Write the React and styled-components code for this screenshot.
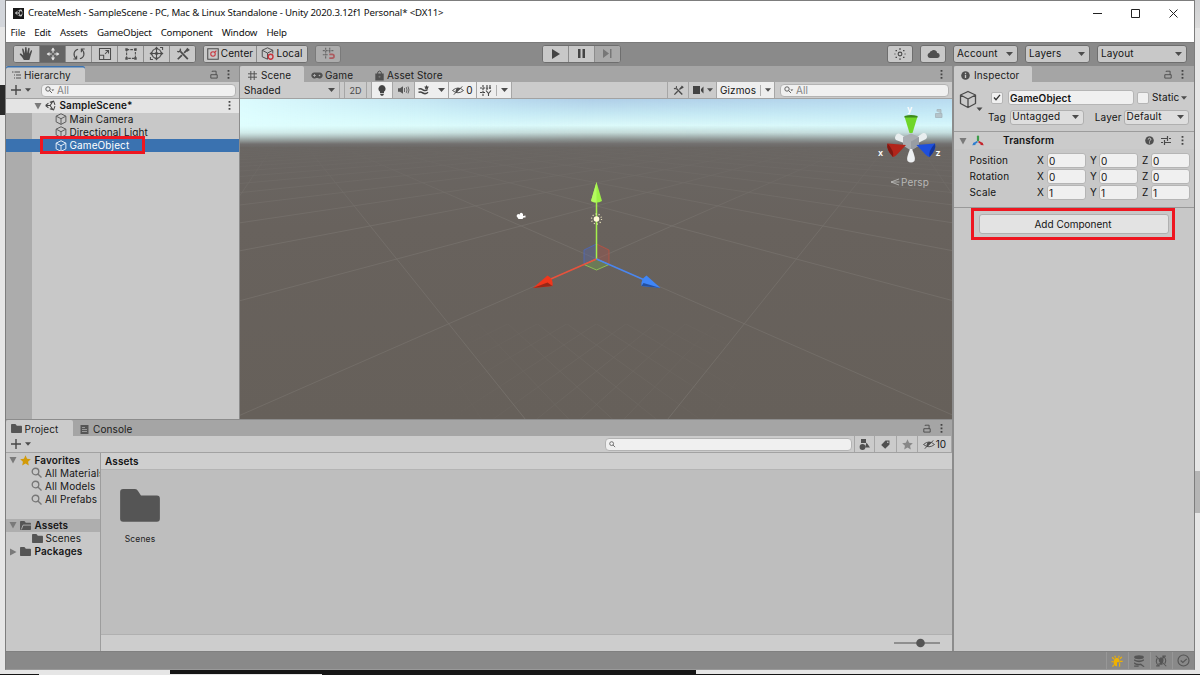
import React from "react";
import styled, { createGlobalStyle, css } from "styled-components";

const Global = createGlobalStyle`
  * { box-sizing: border-box; }
  body { margin: 0; overflow: hidden; }
  svg { display: block; flex: none; }
`;

const ui = `"Inter", "Liberation Sans", sans-serif`;
const system = `"Noto Sans", "Open Sans", sans-serif`;

const Desktop = styled.div`
  width: 1200px;
  height: 675px;
  padding-left: 5px;
  overflow: hidden;
  background:
    linear-gradient(#2a2a2a, #2a2a2a) 0 85px / 5px 30px no-repeat,
    linear-gradient(#d3d6db, #d3d6db) 0 0 / 5px 27px no-repeat,
    linear-gradient(#cfd0d2, #dcdcdc) 1195px 0 / 5px 28px no-repeat,
    linear-gradient(#b5b5b5, #b5b5b5) 1195px 471px / 5px 42px no-repeat,
    linear-gradient(#161616, #161616) 170px 669px / 526px 5px no-repeat,
    linear-gradient(#161616, #161616) 0 674px / 39px 1px no-repeat,
    linear-gradient(#161616, #161616) 322px 674px / 878px 1px no-repeat,
    #e6e6e6;
`;

const Window = styled.div`
  display: flex;
  flex-direction: column;
  width: 1190px;
  height: 670px;
  border: 1px solid #7d7d7d;
  border-bottom-color: #999;
  background: #8a8a8a;
  color: #141414;
  font: 10px/13px ${ui};
  letter-spacing: 0.11px;
  white-space: nowrap;
`;

const TitleBar = styled.header`
  display: flex;
  align-items: center;
  height: 24px;
  padding: 0 16px 0 7px;
  background: #fff;
  color: #111;
  font: 9.7px/14px ${system};
  letter-spacing: -0.17px;
`;
const AppIcon = styled.span`
  display: grid;
  place-items: center;
  width: 11px;
  height: 11px;
  margin-right: 4px;
  background: #181818;
`;
const Title = styled.span`flex: 1;`;
const Caption = styled.span`
  display: flex;
  align-items: center;
  gap: 29px;
`;
const MenuBar = styled.nav`
  display: flex;
  gap: 9.1px;
  height: 17px;
  padding: 1px 0 0 4.5px;
  background: #fff;
  color: #111;
  font: 9.7px/14px ${system};
  letter-spacing: -0.2px;
`;

const Toolbar = styled.div`
  display: flex;
  align-items: center;
  height: 24px;
  padding: 0 7px 2px;
  border-top: 1px solid #7b7b7b;
`;
const Spring = styled.span`flex: 1;`;
const Gap = styled.span`flex: none; width: ${(p) => p.$w}px;`;
const Group = styled.div`
  display: flex;
  flex: none;
  height: 18px;
  border: 1px solid #6e6e6e;
  border-radius: 3px;
  overflow: hidden;
  background: #c8c8c8;
  opacity: ${(p) => (p.$faded ? 0.55 : 1)};
`;
const Tool = styled.button`
  display: flex;
  align-items: center;
  justify-content: center;
  gap: 2px;
  width: ${(p) => p.$w || 26}px;
  margin: 0;
  padding: 0;
  border: 0;
  border-left: 1px solid #8c8c8c;
  background: ${(p) => (p.$on ? "#656565" : p.$off ? "#a9a9a9" : "#c8c8c8")};
  color: ${(p) => (p.$on ? "#e4e4e4" : p.$off ? "#777" : "#4c4c4c")};
  font: inherit;
  letter-spacing: inherit;
  &:first-child { border-left: 0; }
  span { color: #141414; }
`;
const MenuButton = styled.button`
  display: flex;
  align-items: center;
  justify-content: space-between;
  flex: none;
  width: ${(p) => p.$w}px;
  height: ${(p) => p.$h || 18}px;
  margin: 0;
  padding: 0 4px ${(p) => (p.$soft ? 1 : 0)}px ${(p) => (p.$soft ? 1.5 : 3)}px;
  border: 1px solid ${(p) => (p.$soft ? "#b0b0b0" : "#6e6e6e")};
  border-radius: 3px;
  background: ${(p) => (p.$soft ? "#dedede" : "#c8c8c8")};
  color: #141414;
  font: inherit;
  letter-spacing: 0.18px;
`;

const Docks = styled.main`
  display: flex;
  gap: 2px;
  height: 585px;
  background: #8c8c8c;
`;
const LeftDock = styled.div`
  display: flex;
  flex-direction: column;
  gap: 1px;
  width: 946px;
`;
const UpperDock = styled.div`
  display: flex;
  gap: 1px;
  height: 353px;
`;
const Panel = styled.section`
  display: flex;
  flex-direction: column;
  flex: ${(p) => (p.$w ? "none" : 1)};
  width: ${(p) => (p.$w ? p.$w + "px" : "auto")};
  min-height: 0;
  background: #c8c8c8;
`;
const TabBar = styled.div`
  display: flex;
  flex: none;
  height: 16px;
  padding-right: ${(p) => p.$pr ?? 9}px;
  background: #a5a5a5;
`;
const Tab = styled.div`
  display: flex;
  align-items: center;
  gap: ${(p) => p.$gap || 4}px;
  width: ${(p) => p.$w}px;
  padding: 2px 0 0 ${(p) => p.$pl ?? 7}px;
  border-radius: 2px 2px 0 0;
  color: #1c1c1c;
  ${(p) => p.$active && css`background: #cbcbcb;`}
  ${(p) => p.$focus && css`box-shadow: inset 0 1.5px #3a72b0;`}
  svg { color: #505050; }
`;
const TabTools = styled.div`
  display: flex;
  align-items: center;
  gap: 9px;
  margin-left: auto;
  color: #4a4a4a;
`;
const PanelToolbar = styled.div`
  display: flex;
  align-items: center;
  flex: none;
  height: 17px;
  padding: 0 ${(p) => p.$pr ?? 3}px 0 ${(p) => p.$pl ?? 5}px;
  border-bottom: 1px solid #a2a2a2;
  background: #cbcbcb;
`;
const Search = styled.div`
  display: flex;
  align-items: center;
  gap: 2px;
  width: ${(p) => p.$w}px;
  height: 13px;
  padding: 0 3px;
  border: 1px solid #b3b3b3;
  border-radius: 4px;
  background: #f0f0f0;
  color: #848484;
  svg { color: #555; }
`;
const Cell = styled.div`
  display: flex;
  align-items: center;
  justify-content: ${(p) => p.$justify || "center"};
  flex: none;
  gap: ${(p) => p.$gap ?? 2}px;
  width: ${(p) => p.$w}px;
  height: 16px;
  padding: 0 ${(p) => p.$pad ?? 3}px;
  border-right: 1px solid #a6a6a6;
  background: ${(p) => (p.$on ? "#eeeeee" : "transparent")};
  color: #4a4a4a;
  span { color: #161616; }
`;
const SmallCell = styled(Cell)`font-size: 9px; letter-spacing: 0;`;
const Bar = styled.i`width: 1px; height: 11px; background: #b0b0b0; margin: 0 2px;`;

const Tree = styled.div`
  position: relative;
  flex: 1;
  padding-top: 0.4px;
  background: linear-gradient(90deg, #acacac 26px, #c8c8c8 26px);
`;
const Row = styled.div`
  display: flex;
  align-items: center;
  gap: ${(p) => p.$gap ?? 2}px;
  height: 13.2px;
  padding-left: ${(p) => p.$indent}px;
  padding-right: 8px;
  font-weight: ${(p) => (p.$bold ? 600 : 400)};
  background: ${(p) => p.$bg || "transparent"};
  color: ${(p) => (p.$selected ? "#fff" : "#161616")};
  > svg { color: ${(p) => (p.$selected ? "#e8f0fa" : "#5a5a5a")}; }
`;
const TreeMark = styled.div`
  position: absolute;
  left: 34px;
  top: 37px;
  width: 105px;
  height: 18px;
  border: 3px solid #ee1620;
`;

const SceneView = styled.div`
  position: relative;
  flex: 1;
  overflow: hidden;
`;

const Content = styled.div`
  display: flex;
  flex: 1;
  min-height: 0;
`;
const Sidebar = styled.div`
  width: 95px;
  padding-top: 0.5px;
  border-right: 1px solid #9d9d9d;
  background: #c8c8c8;
  overflow: hidden;
`;
const RowGap = styled.div`height: 12.5px;`;
const Browser = styled.div`
  display: flex;
  flex-direction: column;
  flex: 1;
`;
const PathBar = styled.div`
  height: 17px;
  padding: 2px 4px;
  border-bottom: 1px solid #b4b4b4;
  background: #cfcfcf;
  font-weight: 600;
`;
const Items = styled.div`
  flex: 1;
  padding: 19px 0 0 19px;
  background: #bebebe;
`;
const Item = styled.figure`
  display: flex;
  flex-direction: column;
  align-items: center;
  gap: 11px;
  width: 40px;
  margin: 0;
  color: #222;
  font-size: 8.5px;
  letter-spacing: 0.15px;
  line-height: 13px;
`;
const ZoomBar = styled.div`
  display: flex;
  align-items: center;
  justify-content: flex-end;
  height: 17px;
  padding-right: 12px;
  border-top: 1px solid #b0b0b0;
  background: #cdcdcd;
`;

const ObjectHeader = styled.div`
  display: flex;
  gap: 5px;
  height: 50px;
  padding: 8px 5px 0 5px;
  border-bottom: 1px solid #9c9c9c;
  background: #cbcbcb;
`;
const HeaderLines = styled.div`
  display: flex;
  flex-direction: column;
  gap: 4.5px;
  flex: 1;
`;
const Line = styled.div`
  display: flex;
  align-items: center;
  height: 15px;
`;
const Check = styled.span`
  display: grid;
  place-items: center;
  flex: none;
  width: 12px;
  height: 12px;
  border: 1px solid #b5b5b5;
  border-radius: 2px;
  background: #f0f0f0;
`;
const Field = styled.div`
  flex: none;
  width: ${(p) => p.$w}px;
  height: 15px;
  padding: 0 1px;
  border: 1px solid #b5b5b5;
  border-radius: 3px;
  background: #f0f0f0;
  font-weight: ${(p) => (p.$bold ? 600 : 400)};
  line-height: 14px;
`;
const ComponentHeader = styled.div`
  display: flex;
  align-items: center;
  height: 17px;
  padding: 0 10px 0 5px;
  background: #cbcbcb;
  color: #4c4c4c;
  font-weight: 600;
  span { color: #141414; }
`;
const Properties = styled.div`
  height: 59px;
  padding-top: 3px;
  border-bottom: 1px solid #999;
`;
const Property = styled.div`
  display: grid;
  grid-template-columns: 67.5px 10px 39px 4px 9px 39px 4px 9px 39px;
  align-items: center;
  height: 16.4px;
  padding-left: 15.5px;
`;
const AddMark = styled.div`
  width: 204px;
  height: 32px;
  margin: 0 0 0 17px;
  padding: 3px 3px 3px 5px;
  border: 3px solid #ee1620;
`;
const AddButton = styled.button`
  display: block;
  width: 190px;
  height: 20px;
  margin: 0;
  padding: 0 2px 0 0;
  border: 1px solid #b0b0b0;
  border-radius: 3px;
  background: #e3e3e3;
  color: #141414;
  font: inherit;
  letter-spacing: 0;
`;
const StatusBar = styled.footer`
  display: flex;
  justify-content: flex-end;
  height: 18px;
  border-top: 1px solid #808080;
  background: #898989;
`;
const Status = styled.span`
  display: grid;
  place-items: center;
  width: 22px;
  padding-right: 1px;
  border-left: 1px solid #979797;
`;

/* icons */
const Svg = ({ w = 12, h, box = 16, children, ...rest }) => (
  <svg width={w} height={h || w} viewBox={`0 0 ${box} ${box}`} fill="none" stroke="currentColor" strokeWidth="1.4" {...rest}>
    {children}
  </svg>
);
const Arrow = ({ w = 7 }) => (
  <svg width={w} height="4" viewBox="0 0 7 4"><path d="M0 0h7L3.5 4z" fill="#4c4c4c" /></svg>
);
const Fold = ({ closed }) => (
  <svg width="8" height="8" viewBox="0 0 8 8"><path d={closed ? "M1 0.5v7L7.5 4z" : "M0.5 1h7L4 7.5z"} fill="#7a7a7a" /></svg>
);
const Dots = () => (
  <svg width="3" height="9" viewBox="0 0 3 9" fill="#444"><path d="M.6 0h1.800v1.800H.6zM.6 3.500h1.800v1.800H.6zM.6 7h1.800v1.800H.6z" /></svg>
);
const Lock = () => (
  <svg width="8" height="9" viewBox="0 0 8 9" fill="none" stroke="currentColor" strokeWidth=".9"><path d="M.8 4.700h6.400v3.400H.8zM2.200 2V1.200h3.900v3.500" /></svg>
);
const Lens = ({ w = 8, menu, color }) => (
  <svg width={w + (menu ? 2 : 0)} height={w} viewBox={`0 0 ${menu ? 10 : 8} 8`} fill="none" stroke={color || "currentColor"} strokeWidth=".9">
    <circle cx="3" cy="3" r="2.200" /><path d="M4.600 4.600 7 7" />{menu && <path d="M6.300 3.600h3L7.800 5z" fill="currentColor" stroke="none" />}
  </svg>
);
const Cube = ({ w = 12, s = 1.3 }) => (
  <Svg w={w} strokeWidth={s} strokeLinejoin="round"><path d="M8 1 14.500 4.200v7.600L8 15.200 1.500 11.800V4.200zM1.500 4.200 8 7.600l6.500-3.400M8 7.600v7.600" /></Svg>
);
const Hand = () => (
  <Svg w={15} stroke="none" fill="currentColor">
    <path d="M5.200 15C4 12.500 2.500 10.600 1 9.200c-.6-.8.600-1.500 1.500-.9L4.600 10 3.300 3.600c-.2-1.100 1.200-1.400 1.500-.4L6.300 8 6.500 1.800c0-1.100 1.500-1.100 1.600 0L8.500 8l1.300-5.500c.3-1 1.600-.7 1.500.3L10.600 8.500l2-3.500c.6-.9 1.700-.3 1.300.7L12.200 11c-.4 1.600-.7 2.600-1.200 4z" />
  </Svg>
);
const Move = () => (
  <Svg w={14} strokeWidth="1.3"><path d="M8 1.500v5M8 9.500v5M1.500 8h5M9.500 8h5" /><path d="M5.600 4 8 .7 10.400 4zM5.600 12 8 15.300 10.400 12zM4 5.600.7 8 4 10.400zM12 5.600 15.300 8 12 10.400z" fill="currentColor" stroke="none" /></Svg>
);
const Rotate = () => (
  <Svg w={14} strokeWidth="1.300"><path d="M7 2.500C1.800 3.500.8 9.500 4.800 13.200M1.500 13.700h3.800V10M9 13.500c5.200-1 6.200-7 2.200-10.700M14.500 2.300h-3.800V6" /></Svg>
);
const Scale = () => (
  <Svg w={14} strokeWidth="1.200"><path d="M1.700 1.700h12.600v12.600H1.700zM1.700 9.500h4.800v4.800M8 8l3.800-3.800M8.500 4h3.500v3.500" /></Svg>
);
const RectTool = () => (
  <Svg w={14} strokeWidth="1.200"><path d="M3 3h10v10H3z" strokeDasharray="3 1.200" /><path d="M1.500 1.500h2.800v2.800H1.500zM11.700 1.500h2.800v2.800h-2.800zM1.500 11.700h2.800v2.800H1.500zM11.700 11.700h2.800v2.800h-2.800z" fill="currentColor" stroke="none" /></Svg>
);
const TransformTool = () => (
  <Svg w={15} strokeWidth="1.100"><circle cx="8" cy="8" r="5" /><path d="M8 2v12M2 8h12M6.500 3.200 8 1.400 9.500 3.200M6.500 12.800 8 14.600 9.500 12.800M3.200 6.500 1.400 8l1.800 1.500M12.800 6.500 14.600 8l-1.800 1.500M11.800 1.500h2.700v2.700M1.500 11.800v2.700h2.700" /><path d="M6.300 6.300h3.400v3.400H6.300z" fill="currentColor" stroke="none" opacity=".6" /></Svg>
);
const Wrench = ({ w = 14 }) => (
  <Svg w={w} strokeWidth="2"><path d="M5 5l8.500 8.800M2 14l4.800-4.800M9.300 6.700 12 4" /><path d="M1.500 4.800c1.600 1.300 4.200.3 3.500-3M11.500 4.500l1.500-2.500 1.500 1.300-2.500 1.700" strokeWidth="1.600" /></Svg>
);
const Pivot = () => (
  <Svg w={12}><path d="M1 1h14v14H1z" /><g stroke="#c8343c"><circle cx="8" cy="8" r="3" /><path d="m10.200 5.800 2.300-2.300" /></g></Svg>
);
const LocalIcon = () => (
  <Svg w={13} strokeWidth="1.200"><path d="M8 15 1.500 12V4L8 1l6.500 3v4M1.500 4 8 7.500 14.500 4M8 7.500V15" /><circle cx="11.800" cy="12" r="3" stroke="#c8343c" strokeWidth="1.700" /></Svg>
);
const Snap = () => (
  <Svg w={13}><path d="M4.500 1v13M9.500 1v7M1 4.500h14M1 9.500h6" strokeDasharray="2.500 1" /><path d="M9 9h3.500a2.300 2.300 0 0 1 0 4.700H9" stroke="#c8343c" strokeWidth="2" /></Svg>
);
const Collab = () => (
  <Svg w={12} strokeWidth="1.500"><circle cx="8" cy="8" r="2.500" /><path d="M8 0v2.500M8 13.500V16M2 3.500h2M12 3.500h2M2 12.500h2M12 12.500h2M.5 8H2M14 8h1.500" /></Svg>
);
const Cloud = () => (
  <Svg w={13} stroke="none" fill="#4f4f4f"><path d="M3.500 13.500a3.200 3.200 0 0 1-.3-6.300A3 3 0 0 1 5.500 5a4 4 0 0 1 7 2.500 3 3 0 0 1 .3 6z" /></Svg>
);
const GridIcon = () => (
  <Svg w={9} strokeWidth="1.700"><path d="M5 0v16M11 0v16M0 5h16M0 11h16" /></Svg>
);
const Gamepad = () => (
  <svg width="12" height="7" viewBox="0 0 12 7"><path d="M3.500.5h5a3 3 0 1 1-1.500 5.500H5A3 3 0 1 1 3.500.5z" fill="#505050" /><path d="M2 3.500h3M3.500 2v3" stroke="#b5b5b5" strokeWidth=".8" /><circle cx="8.500" cy="3.500" r=".8" fill="#b5b5b5" /></svg>
);
const Bag = () => (
  <svg width="9" height="11" viewBox="0 0 9 11"><path d="M.3 3.500h8.400v7H.3z" fill="#505050" /><path d="M2.500 4.500q-.2-3.500 2-3.500t2 3.500" fill="none" stroke="#505050" /><circle cx="4.500" cy="6.800" r="1" fill="#777" /></svg>
);
const ListIcon = () => (
  <svg width="9" height="8" viewBox="0 0 9 8" stroke="#505050" strokeWidth="1"><path d="M0 1h1.500M2.500 1H8M2 4h1M4 4h5M2 7h1M4 7h5" /></svg>
);
const Info = ({ q }) => (
  <svg width="9" height="9" viewBox="0 0 9 9"><circle cx="4.500" cy="4.500" r="4.300" fill="#505050" />{q ? <path d="M3.200 3.500c0-2 2.800-1.600 2.600 0-.2 1-1.300.8-1.300 2M4.500 6.400v1" stroke="#d0d0d0" fill="none" /> : <path d="M4.500 1.700v1.200M4.500 3.800v3.300" stroke="#ccc" strokeWidth="1.300" />}</svg>
);
const Folder = ({ w = 11, open }) => (
  <svg width={w} height={w * 0.82} viewBox="0 0 40 33"><path d="M0 3a3 3 0 0 1 3-3h12q2 0 3 2l3 4.500h16a3 3 0 0 1 3 3V30a3 3 0 0 1-3 3H3a3 3 0 0 1-3-3z" fill="#555" />{open && <path d="M5 31 11 15h29" stroke="#bbb" strokeWidth="3" fill="none" />}</svg>
);
const Star = ({ color, w = 11 }) => (
  <svg width={w} height={w} viewBox="0 0 12 12"><path d="m6 .4 1.700 3.800 4.100.5-3 2.700.8 4.100L6 9.400l-3.600 2.100.8-4.100-3-2.700 4.100-.5z" fill={color} /></svg>
);
const ConsoleIcon = () => (
  <svg width="9" height="9" viewBox="0 0 9 9"><path d="M.5 0h8v9h-8z" fill="#555" /><path d="M2 2.500h3M2 4.500h5M2 6.500h5" stroke="#aaa" strokeWidth=".8" /></svg>
);
const Plus = () => (
  <svg width="10" height="10" viewBox="0 0 10 10" stroke="#484848" strokeWidth="1.400"><path d="M5 0v10M0 5h10" /></svg>
);
const UnityMark = ({ w = 11, color = "#444" }) => (
  <Svg w={w} stroke={color} strokeWidth="1.500"><path d="M1 8 5 4.500M1 8l4 3.500M1 8h6.500M7.500 8 11 2.500M7.500 8l3.500 5.500M7 3.200l5.500-1.500L14.500 7M14.500 9l-2 5.300L7 12.800" /></Svg>
);
const Bulb = () => (
  <svg width="8" height="11" viewBox="0 0 8 11"><path d="M4 0a3.700 3.700 0 0 1 2 6.700v1.500H2V6.700A3.700 3.700 0 0 1 4 0zM2.300 9h3.400v1L4 11l-1.700-1z" fill="#444" /></svg>
);
const Speaker = () => (
  <svg width="12" height="8" viewBox="0 0 12 8"><path d="M0 2.300h2L5 .3v7.400l-3-2H0z" fill="#555" /><path d="M6.500 2v4M8.300 1.200q1.500 2.800 0 5.600M10 .5q2 3.500 0 7" fill="none" stroke="#666" /></svg>
);
const Effects = () => (
  <svg width="12" height="10" viewBox="0 0 12 10" fill="none" stroke="#444" strokeWidth="1.500"><path d="M.5 4.200q2-1 4.500.6t4.500-.3M.5 7.400q2-1 4.500.6t5-.8" /><path d="m8.500 0 .8 1.500 1.900.3-1.400 1.200.4 1.500-1.700-.8-1.500.6.3-1.500L6 1.700l1.700-.2z" fill="#444" stroke="none" /></svg>
);
const HiddenEye = () => (
  <svg width="12" height="9" viewBox="0 0 12 9" fill="none" stroke="#484848" strokeWidth=".9"><path d="M.5 4.500Q6-.5 11.500 4.500 6 9 .5 4.500zM1.500 8.800l9-8.500" /><path d="M4 6.500 8 2.600Q5 1.500 4.200 4z" fill="#484848" /></svg>
);
const SnapGrid = () => (
  <svg width="12" height="11" viewBox="0 0 12 11" fill="none" stroke="#444" strokeWidth="1.100"><path d="M3 0v11M7 0v5M0 3h11M0 7.500h5" strokeDasharray="2.200 .8" /><path d="m6 5.500 2.500 3 2.500-3M8.500 8v3M10 0v4" /></svg>
);
const Camera = () => (
  <svg width="11" height="8" viewBox="0 0 11 8" fill="#444"><path d="M0 0h7v8H0zM8 3l2.500-2.500v7L8 5z" /></svg>
);
const Shapes = () => (
  <svg width="11" height="11" viewBox="0 0 11 11" fill="#505050"><path d="M2 0h5v4H2zM7.500 3.500 11 8.500H6z" /><circle cx="3.500" cy="8" r="2.900" /></svg>
);
const TagIcon = () => (
  <svg width="9" height="9" viewBox="0 0 9 9"><path d="M4.500.5H8.500v4L4.200 8.800.2 5z" fill="#505050" /><circle cx="6.800" cy="2.300" r=".8" fill="#ccc" /></svg>
);
const TransformMark = () => (
  <svg width="12" height="11" viewBox="0 0 12 11" fill="none" strokeLinecap="round"><path d="M6 5.300V1.500" stroke="#3d9b4a" strokeWidth="2.200" /><path d="M4.800 7 2 8.700" stroke="#2f7fd0" strokeWidth="1.800" /><path d="m7.200 7 2.800 1.700" stroke="#c4242c" strokeWidth="1.800" /><path d="M2 7.200.2 10.300l3.600-.2z" fill="#2f7fd0" /><path d="m10 7.200 1.800 3.100-3.600-.2z" fill="#c4242c" /></svg>
);
const Presets = () => (
  <svg width="10" height="9" viewBox="0 0 10 9" stroke="#4a4a4a" strokeWidth="1.200"><path d="M0 2.500h6.500M8 2.500h2M6.500 0v5M0 6.500h2M3.500 6.500H10M3.500 4v5" /></svg>
);
const Bug = () => (
  <Svg w={12} stroke="#efb100" strokeWidth="1.500"><path d="M8 3.500q-4.500.5-4.500 6T8 15V9.500h3.500q.3-5.500-3.500-6z" fill="#efb100" stroke="none" /><path d="M4 5.500 1.500 3M12 5l2.500-2.500M3.500 9H.5M12 8.500h3.500M4 13l-2 2.500M6 3.500 5 1M10 3.500 11 1M11.500 10v5.500" /></Svg>
);
const Cache = () => (
  <Svg w={12} stroke="none" fill="#555"><ellipse cx="8" cy="3" rx="6.500" ry="2.600" /><path d="M1.500 5.500q6.500 3.500 13 0v2.300q-6.500 3.500-13 0zM1.500 9.800q5 3 9 1.500l5 4-1.500.7-3.500-2.500q-5 1-9-1.400zM1.500 14h6v1.500h-6z" /></Svg>
);
const AutoLight = () => (
  <Svg w={12} stroke="#555"><path d="M8 3a4 4 0 0 1 2 7v3H6.500v-3A4 4 0 0 1 8 3z" fill="#555" stroke="none" /><path d="M1 1l14 14M3 4.500q-3.500 6 2.500 10M1.500 14.500h4v-4M13 11.500q3.500-6-2.500-10M14.500 1.500h-4v4" /></Svg>
);
const Done = () => (
  <Svg w={13} stroke="#555" strokeWidth="1.400"><circle cx="8" cy="8" r="6.800" /><path d="m4.500 8 2.700 2.500L12 6" /></Svg>
);

/* Perspective floor grid, seen along the diagonal */
const ORIGIN = { x: 355.5, y: 160 };
const FOCAL = 277;
const PITCH = (26 * Math.PI) / 180;
const toCamera = (a, b) => {
  const side = (a - b) / Math.SQRT2;
  const away = (a + b) / Math.SQRT2;
  return { x: side, y: away * Math.sin(PITCH), z: 1 + away * Math.cos(PITCH) };
};
const segment = (p, q) => {
  let [m, n] = [toCamera(...p), toCamera(...q)];
  const near = 0.12;
  if (m.z < near && n.z < near) return "";
  if (m.z > n.z) [m, n] = [n, m];
  if (m.z < near) {
    const t = (near - m.z) / (n.z - m.z);
    m = { x: m.x + (n.x - m.x) * t, y: m.y + (n.y - m.y) * t, z: near };
  }
  const at = (v) => `${(ORIGIN.x + (FOCAL * v.x) / v.z).toFixed(1)} ${(ORIGIN.y - (FOCAL * v.y) / v.z).toFixed(1)}`;
  return `M${at(m)}L${at(n)}`;
};
const gridPath = (step, count) => {
  let d = "";
  const end = step * count;
  for (let i = -count; i <= count; i++) {
    d += segment([i * step, -end], [i * step, end]) + segment([-end, i * step], [end, i * step]);
  }
  return d;
};
const coarseGrid = gridPath(0.51, 22);
const fineGrid = gridPath(0.051, 30);

const SceneDrawing = () => (
  <svg width="712" height="320" viewBox="-1 0 712 320">
    <defs>
      <linearGradient id="sky" x1="0" x2="0" y1="0" y2="1">
        <stop offset="0" stopColor="#b0cfe8" /><stop offset=".28" stopColor="#c3e6f2" /><stop offset=".55" stopColor="#dcfafa" />
        <stop offset=".7" stopColor="#c4dad8" /><stop offset=".84" stopColor="#8d9492" /><stop offset=".93" stopColor="#737170" /><stop offset="1" stopColor="#6b6866" />
      </linearGradient>
      <linearGradient id="glow" x1="0" x2="1">
        <stop offset="0" stopColor="#e0ffff" stopOpacity=".9" /><stop offset=".25" stopColor="#dcffff" stopOpacity=".5" />
        <stop offset=".5" stopColor="#c8f0ff" stopOpacity="0" /><stop offset="1" stopColor="#c8f0ff" stopOpacity=".35" />
      </linearGradient>
      <linearGradient id="glowFade" x1="0" x2="0" y1="0" y2="1">
        <stop offset=".45" stopColor="#fff" /><stop offset=".95" stopColor="#000" />
      </linearGradient>
      <linearGradient id="ground" x1="0" x2="0" y1="0" y2="1">
        <stop offset="0" stopColor="#6b6866" /><stop offset=".4" stopColor="#68625d" /><stop offset="1" stopColor="#66605a" />
      </linearGradient>
      <linearGradient id="fade" x1="0" x2="0" y1="0" y2="1">
        <stop offset=".13" stopColor="#000" /><stop offset=".4" stopColor="#fff" />
      </linearGradient>
      <radialGradient id="near" cx="355" cy="285" r="170" gradientUnits="userSpaceOnUse">
        <stop offset="0" stopColor="#fff" /><stop offset="1" stopColor="#000" />
      </radialGradient>
      <mask id="far"><rect x="-1" width="712" height="320" fill="url(#fade)" /></mask>
      <mask id="close"><rect x="-1" y="225" width="712" height="95" fill="url(#near)" /></mask>
      <mask id="upper"><rect x="-1" width="712" height="48" fill="url(#glowFade)" /></mask>
    </defs>
    <rect x="-1" width="712" height="320" fill="url(#ground)" />
    <rect x="-1" width="712" height="48" fill="url(#sky)" />
    <rect x="-1" width="712" height="48" fill="url(#glow)" mask="url(#upper)" />
    <g fill="none" stroke="#8d8984" strokeWidth=".8">
      <path d={coarseGrid} mask="url(#far)" opacity=".38" />
      <path d={fineGrid} mask="url(#close)" opacity=".2" />
    </g>

    <path d="M275.500 117q1-3 3-1.500 1-3 3.500-.5v2l2.500-.5v2h-2l-1 1.500h-4z" fill="#fff" />
    <g transform="translate(.5 0)">
      <path d="M355 160 342.500 165.500V151L355 145z" fill="#5468b0" fillOpacity=".35" stroke="#4b67c0" strokeWidth=".8" />
      <path d="M355 160 367.500 165.500V151L355 145z" fill="#b05048" fillOpacity=".35" stroke="#c05040" strokeWidth=".8" />
      <path d="m355 160 12.500 5.500L355 171l-12.500-5.500z" fill="#74a050" fillOpacity=".4" stroke="#96d050" strokeWidth=".8" />
      <path d="M355 160V98" stroke="#a4f04c" strokeWidth="1.500" />
      <path d="m355 160-48 21" stroke="#e8523c" strokeWidth="1.400" />
      <path d="m355 160 48 21" stroke="#4a86f0" strokeWidth="1.400" />
      <path d="m355 83 5.500 19q-5.500 3-11 0z" fill="#9df244" />
      <path d="M355 83v20.500q-3 0-5.500-1.500z" fill="#b4fa60" />
      <path d="m291.500 189 14.500-12.500q6 3 5 10.500z" fill="#f0361c" />
      <path d="m291.500 189 14.500-5.500 5 3.500z" fill="#982818" />
      <path d="m419 189-14-12.500q-6 4-5 10.500z" fill="#3f86f8" />
      <path d="m419 189-17-5-2 3z" fill="#2450a0" />
      <circle cx="355" cy="120" r="2.800" fill="#fffbd8" />
      <circle cx="355" cy="120" r="5" fill="none" stroke="#eee8c0" strokeWidth="1.300" strokeDasharray="1 2.140" />
    </g>

    <path d="M655 36q-2 3 0 5l8 3 2.500-5-7.500-4.500q-2-.5-3 1.500zM685 35q2 3 0 5l-8 4-2.500-5 7.500-5q2-.5 3 1z" fill="#e9eeef" />
    <path d="m662 38 8-3.500 8 3.500v8.500l-8 5-8-5z" fill="#a9adb2" />
    <path d="m670 42.500 8-4.500v8.500l-8 5z" fill="#989da3" />
    <path d="M669 50q-4 9.500-2.500 12 3.500 3 7 0 1.500-2.500-2.500-12z" fill="#eef0f2" />
    <path d="M663.500 17.500h13l-5 16.500h-3z" fill="#6fd629" />
    <path d="M663.500 17q6.500-2 13 0v1.500h-13z" fill="#3d8a1a" />
    <path d="M665 46 646.500 44.500q-1.500 6 5.500 13.500 2-.5 4-2.500z" fill="#b2241a" />
    <path d="M646.500 44.500q-1.500 6 5.500 13.500 1.500-6-5.500-13.500z" fill="#7f1812" />
    <path d="M675.500 46 694 44.500q1.500 6-5.500 13.500-2-.5-4-2.500z" fill="#1e4fdc" />
    <path d="M694 44.500q1.500 6-5.500 13.500-1.500-6 5.500-13.500z" fill="#14359a" />
    <g fill="#fff" fontFamily="Inter, sans-serif" fontWeight="600" fontSize="9">
      <text x="666" y="13">y</text><text x="637" y="57">x</text><text x="694.500" y="57">z</text>
    </g>
    <g fill="none" stroke="#b8b8b6" strokeWidth=".9"><path d="m658 80-8 3 8 3M650 83h8.500" /></g>
    <text x="660" y="87" fill="#b8b8b6" fontFamily="Inter, sans-serif" fontSize="10">Persp</text>
    <path d="M694.500 14.500h6.500V18.500h-6.500zM696 12.500v-2h4v4" fill="#b5c4ca" stroke="#a4b4ba" strokeWidth=".8" />
  </svg>
);

const MENUS = ["File", "Edit", "Assets", "GameObject", "Component", "Window", "Help"];
const TRANSFORM = [["Position", 0], ["Rotation", 0], ["Scale", 1]];

export default function App() {
  return (
    <Desktop>
      <Global />
      <Window>
        <TitleBar>
          <AppIcon><UnityMark w={8} color="#fff" /></AppIcon>
          <Title>CreateMesh - SampleScene - PC, Mac &amp; Linux Standalone - Unity 2020.3.12f1 Personal* &lt;DX11&gt;</Title>
          <Caption>
            <svg width="9" height="9" stroke="#222"><path d="M0 4.500h9" /></svg>
            <svg width="9" height="9" stroke="#222" fill="none"><path d="M.5.5h8v8h-8z" /></svg>
            <svg width="9" height="9" stroke="#222"><path d="m.5.5 8 8M8.500.5l-8 8" /></svg>
          </Caption>
        </TitleBar>
        <MenuBar>{MENUS.map((m) => <span key={m}>{m}</span>)}</MenuBar>

        <Toolbar>
          <Group>
            <Tool $w={25}><Hand /></Tool><Tool $on><Move /></Tool><Tool><Rotate /></Tool><Tool><Scale /></Tool>
            <Tool><RectTool /></Tool><Tool><TransformTool /></Tool><Tool><Wrench /></Tool>
          </Group>
          <Gap $w={7} />
          <Group>
            <Tool $w={52}><Pivot /><span>Center</span></Tool>
            <Tool $w={51}><LocalIcon /><span>Local</span></Tool>
          </Group>
          <Gap $w={7} />
          <Group $faded><Tool $w={24}><Snap /></Tool></Group>
          <Gap $w={201} />
          <Group>
            <Tool $w={25}><svg width="8" height="10"><path d="M0 0v10l8-5z" fill="#444" /></svg></Tool>
            <Tool><svg width="7" height="9"><path d="M0 0h2.500v9H0zM4.500 0H7v9H4.500z" fill="#444" /></svg></Tool>
            <Tool $off $w={26}><svg width="9" height="9"><path d="M0 0v9l6-4.500zM7 0h1.500v9H7z" fill="#777" /></svg></Tool>
          </Group>
          <Spring />
          <Group><Tool $w={24}><Collab /></Tool></Group>
          <Gap $w={7} />
          <Group><Tool $w={24}><Cloud /></Tool></Group>
          <Gap $w={7} />
          <MenuButton $w={65}>Account<Arrow /></MenuButton>
          <Gap $w={7} />
          <MenuButton $w={65}>Layers<Arrow /></MenuButton>
          <Gap $w={7} />
          <MenuButton $w={90}>Layout<Arrow /></MenuButton>
        </Toolbar>

        <Docks>
          <LeftDock>
            <UpperDock>
              <Panel $w={233}>
                <TabBar>
                  <Tab $active $focus $w={79} $pl={6} $gap={3}><ListIcon />Hierarchy</Tab>
                  <TabTools><Lock /><Dots /></TabTools>
                </TabBar>
                <PanelToolbar>
                  <Plus /><Gap $w={4} /><Arrow w={6} /><Gap $w={10} />
                  <Search $w={196}><Lens menu />All</Search>
                </PanelToolbar>
                <Tree>
                  <Row $bold $gap={3.5} $indent={27.5} $bg="#e4e4e4"><Fold /><UnityMark />SampleScene*<Spring /><Dots /></Row>
                  <Row $gap={2.5} $indent={49}><Cube />Main Camera</Row>
                  <Row $gap={2.5} $indent={49}><Cube />Directional Light</Row>
                  <Row $gap={2.5} $indent={49} $selected $bg="#3a72b0"><Cube />GameObject</Row>
                  <TreeMark />
                </Tree>
              </Panel>
              <Panel>
                <TabBar>
                  <Tab $active $w={64} $pl={8}><GridIcon />Scene</Tab>
                  <Tab $w={63} $gap={2}><Gamepad />Game</Tab>
                  <Tab $w={90} $pl={8} $gap={3}><Bag />Asset Store</Tab>
                  <TabTools><Dots /></TabTools>
                </TabBar>
                <PanelToolbar $pl={0}>
                  <Cell $w={100} $justify="space-between" $pad={4}><span>Shaded</span><Arrow /></Cell>
                  <Cell $w={5} $pad={0} />
                  <SmallCell $w={22}>2D</SmallCell>
                  <Cell $w={5} $pad={0} />
                  <Cell $w={21} $on><Bulb /></Cell>
                  <Cell $w={22}><Speaker /></Cell>
                  <Cell $w={34} $on><Effects /><Bar /><Arrow /></Cell>
                  <Cell $w={28} $on><HiddenEye /><span>0</span></Cell>
                  <Cell $w={35} $on><SnapGrid /><Bar /><Arrow /></Cell>
                  <Spring />
                  <Cell $w={1} $pad={0} />
                  <Cell $w={21}><Wrench w={11} /></Cell>
                  <Cell $w={28} $gap={3}><Camera /><Arrow w={6} /></Cell>
                  <Cell $w={58} $on><span>Gizmos</span><Bar /><Arrow w={6} /></Cell>
                  <Gap $w={5} />
                  <Search $w={169}><Lens menu />All</Search>
                </PanelToolbar>
                <SceneView><SceneDrawing /></SceneView>
              </Panel>
            </UpperDock>

            <Panel>
              <TabBar>
                <Tab $active $w={67} $pl={5} $gap={2.5}><Folder />Project</Tab>
                <Tab $w={70}><ConsoleIcon />Console</Tab>
                <TabTools><Lock /><Dots /></TabTools>
              </TabBar>
              <PanelToolbar $pr={0}>
                <Plus /><Gap $w={4} /><Arrow w={6} /><Spring />
                <Search $w={247}><Lens w={7} /></Search>
                <Gap $w={2} />
                <Cell $w={1} $pad={0} />
                <Cell $w={20}><Shapes /></Cell>
                <Cell $w={22}><TagIcon /></Cell>
                <Cell $w={21}><Star color="#888" /></Cell>
                <Cell $w={34} $gap={1}><HiddenEye /><span>10</span></Cell>
              </PanelToolbar>
              <Content>
                <Sidebar>
                  <Row $bold $gap={3.5} $indent={2.5}><Fold /><Star color="#d29a08" />Favorites</Row>
                  {["All Materials", "All Models", "All Prefabs"].map((t) => (
                    <Row key={t} $gap={2} $indent={25}><Lens w={12} color="#777" />{t}</Row>
                  ))}
                  <RowGap />
                  <Row $bold $gap={3.5} $indent={2.5} $bg="#aeaeae"><Fold /><Folder open />Assets</Row>
                  <Row $gap={3} $indent={25.5}><Folder />Scenes</Row>
                  <Row $bold $gap={3.5} $indent={2.5}><Fold closed /><Folder />Packages</Row>
                </Sidebar>
                <Browser>
                  <PathBar>Assets</PathBar>
                  <Items><Item><Folder w={40} />Scenes</Item></Items>
                  <ZoomBar>
                    <svg width="46" height="10"><path d="M0 5h46" stroke="#7a7a7a" strokeWidth="1.500" /><circle cx="26.500" cy="5" r="4.300" fill="#555" /></svg>
                  </ZoomBar>
                </Browser>
              </Content>
            </Panel>
          </LeftDock>

          <Panel>
            <TabBar $pr={10}>
              <Tab $active $w={78} $pl={7}><Info />Inspector</Tab>
              <TabTools><Lock /><Dots /></TabTools>
            </TabBar>
            <ObjectHeader>
              <svg width="24" height="24" viewBox="0 0 24 24" fill="none" stroke="#4a4a4a" strokeWidth="1.300" strokeLinejoin="round">
                <path d="m9 1.500 7.500 3.500V13.500L9 17.500 1.500 13.500V5zM1.500 5 9 9l7.500-4M9 9v8.500" /><path d="M17.500 17.500h6L20.500 21z" fill="#4a4a4a" stroke="none" />
              </svg>
              <HeaderLines>
                <Line>
                  <Gap $w={3} />
                  <Check><svg width="8" height="7" fill="none" stroke="#333" strokeWidth="1.300"><path d="m1 3.500 2 2.200L7 .8" /></svg></Check>
                  <Gap $w={5} /><Field $w={126} $bold>GameObject</Field><Gap $w={3} />
                  <Check /><Gap $w={3} />Static<Gap $w={2} /><Arrow w={6} />
                </Line>
                <Line>
                  Tag<Gap $w={4} />
                  <MenuButton $soft $w={74} $h={15}>Untagged<Arrow /></MenuButton>
                  <Gap $w={11} />Layer<Spring />
                  <MenuButton $soft $w={65} $h={15}>Default<Arrow /></MenuButton>
                </Line>
              </HeaderLines>
            </ObjectHeader>
            <ComponentHeader>
              <Fold /><Gap $w={5} /><TransformMark /><Gap $w={19} /><span>Transform</span><Spring />
              <Info q /><Gap $w={7} /><Presets /><Gap $w={10} /><Dots />
            </ComponentHeader>
            <Properties>
              {TRANSFORM.map(([name, v]) => (
                <Property key={name}>
                  <span>{name}</span><span>X</span><Field $w={39}>{v}</Field>
                  <i /><span>Y</span><Field $w={39}>{v}</Field>
                  <i /><span>Z</span><Field $w={39}>{v}</Field>
                </Property>
              ))}
            </Properties>
            <AddMark><AddButton>Add Component</AddButton></AddMark>
          </Panel>
        </Docks>
        <StatusBar>
          <Status><Bug /></Status><Status><Cache /></Status><Status><AutoLight /></Status><Status><Done /></Status>
        </StatusBar>
      </Window>
    </Desktop>
  );
}
